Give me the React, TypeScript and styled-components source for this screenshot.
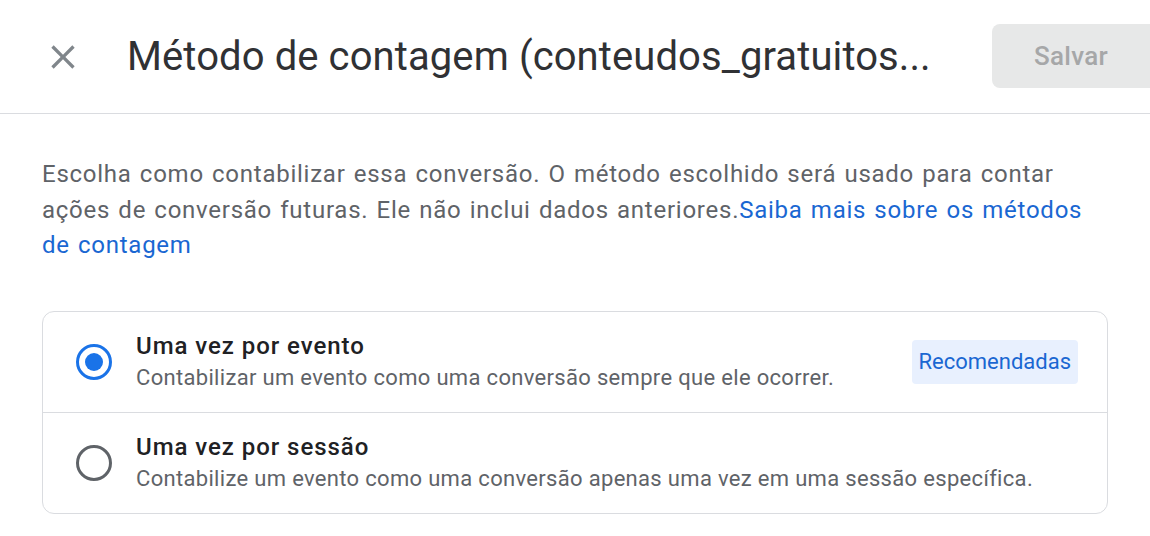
import styled, { createGlobalStyle } from "styled-components";

const GlobalStyle = createGlobalStyle`
    html, body {
        margin: 0;
        padding: 0;
        background: #ffffff;
    }
    body {
        font-family: Roboto, "Liberation Sans", Arial, sans-serif;
        color: #202124;
    }
`;

const Dialog = styled.div`
    width: 1150px;
    height: 536px;
    overflow: hidden;
    background: #ffffff;
`;

const Header = styled.header`
    height: 114px;
    display: flex;
    align-items: center;
    border-bottom: 1px solid #dadce0;
    padding-left: 43px;
    box-sizing: border-box;
`;

const CloseButton = styled.button`
    width: 40px;
    height: 40px;
    padding: 0;
    border: none;
    background: none;
    display: flex;
    align-items: center;
    justify-content: center;
    color: #80868b;
    cursor: pointer;
    flex: none;
`;

const Title = styled.h1`
    margin: 0 0 0 44px;
    flex: 1;
    font-size: 40px;
    font-weight: 400;
    color: #303134;
    white-space: nowrap;
    overflow: hidden;
    letter-spacing: 0.1px;
`;

const SaveButton = styled.button`
    flex: none;
    width: 158px;
    height: 64px;
    margin-left: 40px;
    align-self: flex-start;
    margin-top: 24px;
    border: none;
    border-radius: 8px 0 0 8px;
    background: #e7e8e8;
    color: #a6a7a8;
    font-family: Roboto, "Liberation Sans", Arial, sans-serif;
    font-size: 26px;
    font-weight: 500;
    letter-spacing: 0.3px;
    padding: 0;
`;

const Body = styled.div`
    padding: 43px 43px 0 42px;
`;

const Intro = styled.p`
    margin: 0;
    font-size: 24px;
    line-height: 35.5px;
    color: #5f6368;
    letter-spacing: 0.75px;
    word-spacing: 1.5px;
    max-width: 1066px;
`;

const Link = styled.a`
    color: #1a67d2;
    text-decoration: none;
`;

const OptionCard = styled.div`
    margin-top: 47px;
    width: 1066px;
    border: 1px solid #dadce0;
    border-radius: 12px;
    box-sizing: border-box;
`;

const OptionRow = styled.label<{ $last?: boolean }>`
    height: 100px;
    display: flex;
    align-items: center;
    padding: 0 29px 0 33px;
    border-bottom: ${(p) => (p.$last ? "none" : "1px solid #dadce0")};
    cursor: pointer;
`;

const Radio = styled.span<{ $checked?: boolean }>`
    flex: none;
    width: 36px;
    height: 36px;
    border-radius: 50%;
    box-sizing: border-box;
    border: 3.5px solid ${(p) => (p.$checked ? "#1a73e8" : "#5f6368")};
    display: flex;
    align-items: center;
    justify-content: center;
    &::after {
        content: "";
        width: 18px;
        height: 18px;
        border-radius: 50%;
        background: ${(p) => (p.$checked ? "#1a73e8" : "transparent")};
    }
`;

const OptionText = styled.div`
    flex: 1;
    margin-left: 24px;
    display: flex;
    flex-direction: column;
`;

const OptionTitle = styled.span`
    font-size: 24px;
    line-height: 32px;
    font-weight: 500;
    color: #202124;
    letter-spacing: 0.95px;
`;

const OptionDesc = styled.span`
    font-size: 22px;
    line-height: 32px;
    color: #5f6368;
    letter-spacing: 0.32px;
`;

const Chip = styled.span`
    flex: none;
    height: 44px;
    padding: 0 7px;
    display: flex;
    align-items: center;
    background: #e8f0fe;
    border-radius: 4px;
    color: #1a67d2;
    font-size: 22px;
    letter-spacing: 0;
`;

const options = [
    {
        title: "Uma vez por evento",
        desc: "Contabilizar um evento como uma conversão sempre que ele ocorrer.",
        checked: true,
        chip: "Recomendadas",
    },
    {
        title: "Uma vez por sessão",
        desc: "Contabilize um evento como uma conversão apenas uma vez em uma sessão específica.",
        checked: false,
    },
];

export function App() {
    return (
        <>
            <GlobalStyle />
            <Dialog>
                <Header>
                    <CloseButton aria-label="Fechar">
                        <svg width="40" height="40" viewBox="0 0 24 24" fill="currentColor">
                            <path d="M19 6.41L17.59 5 12 10.59 6.41 5 5 6.41 10.59 12 5 17.59 6.41 19 12 13.41 17.59 19 19 17.59 13.41 12z" />
                        </svg>
                    </CloseButton>
                    <Title>Método de contagem (conteudos_gratuitos...</Title>
                    <SaveButton disabled>Salvar</SaveButton>
                </Header>
                <Body>
                    <Intro>
                        Escolha como contabilizar essa conversão. O método escolhido será usado para contar
                        ações de conversão futuras. Ele não inclui dados anteriores.
                        <Link href="#">Saiba mais sobre os métodos de contagem</Link>
                    </Intro>
                    <OptionCard>
                        {options.map((o, i) => (
                            <OptionRow key={o.title} $last={i === options.length - 1}>
                                <Radio $checked={o.checked} />
                                <OptionText>
                                    <OptionTitle>{o.title}</OptionTitle>
                                    <OptionDesc>{o.desc}</OptionDesc>
                                </OptionText>
                                {o.chip && <Chip>{o.chip}</Chip>}
                            </OptionRow>
                        ))}
                    </OptionCard>
                </Body>
            </Dialog>
        </>
    );
}

export default App;
